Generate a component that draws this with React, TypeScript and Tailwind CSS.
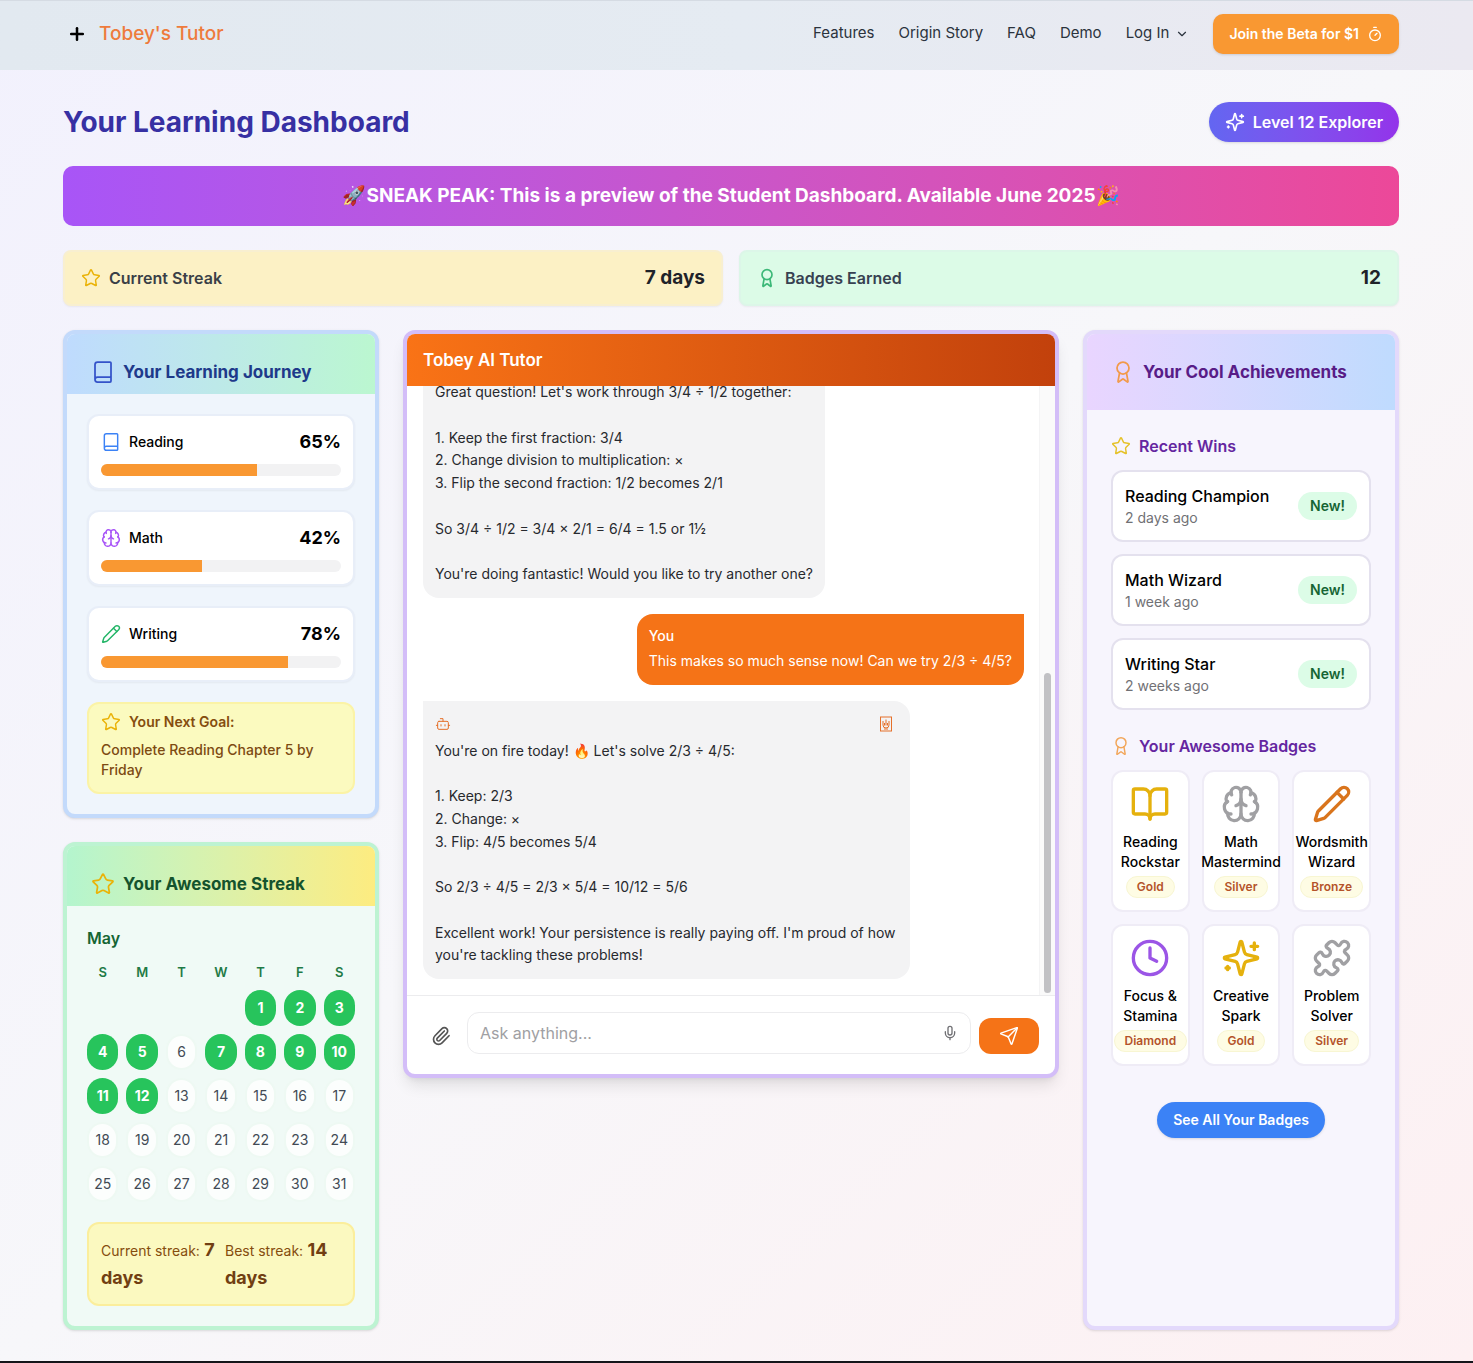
import React from "react";
import {
  Award, Book, BookOpen, Bot, Brain, ChevronDown, Clock, Mic, Paperclip, Pencil, Plus, Send, Star, Timer,
} from "lucide-react";

const navLinks = ["Features", "Origin Story", "FAQ", "Demo"];

function SparklesIcon({ className }: { className: string }) {
  return (
    <svg viewBox="0 0 24 24" className={className} fill="none" stroke="currentColor" strokeWidth="2" strokeLinecap="round" strokeLinejoin="round">
      <path d="M9.937 15.5A2 2 0 0 0 8.5 14.063l-6.135-1.582a.5.5 0 0 1 0-.962L8.5 9.936A2 2 0 0 0 9.937 8.5l1.582-6.135a.5.5 0 0 1 .963 0L14.063 8.5A2 2 0 0 0 15.5 9.937l6.135 1.581a.5.5 0 0 1 0 .964L15.5 14.063a2 2 0 0 0-1.437 1.437l-1.582 6.135a.5.5 0 0 1-.963 0z" />
      <path d="M20 3v4M22 5h-4M4 17v2M5 18H3" />
    </svg>
  );
}

function PuzzleIcon({ className }: { className: string }) {
  return (
    <svg viewBox="0 0 24 24" className={className} fill="none" stroke="currentColor" strokeWidth="2" strokeLinecap="round" strokeLinejoin="round">
      <path d="M19.439 7.85c-.049.322.059.648.289.878l1.568 1.568c.47.47.706 1.087.706 1.704s-.235 1.233-.706 1.704l-1.611 1.611a.98.98 0 0 1-.837.276c-.47-.07-.802-.48-.968-.925a2.501 2.501 0 1 0-3.214 3.214c.446.166.855.497.925.968a.979.979 0 0 1-.276.837l-1.61 1.61a2.404 2.404 0 0 1-1.705.707 2.402 2.402 0 0 1-1.704-.706l-1.568-1.568a1.026 1.026 0 0 0-.877-.29c-.493.074-.84.504-1.02.968a2.5 2.5 0 1 1-3.237-3.237c.464-.18.894-.527.967-1.02a1.026 1.026 0 0 0-.289-.877l-1.568-1.568A2.402 2.402 0 0 1 1.998 12c0-.617.236-1.234.706-1.704L4.23 8.77c.24-.24.581-.353.917-.303.515.077.877.528 1.073 1.01a2.5 2.5 0 1 0 3.259-3.259c-.482-.196-.933-.558-1.01-1.073-.05-.336.062-.676.303-.917l1.525-1.525A2.402 2.402 0 0 1 12 1.998c.617 0 1.234.236 1.704.706l1.568 1.568c.23.23.556.338.877.29.493-.074.84-.504 1.02-.968a2.5 2.5 0 1 1 3.237 3.237c-.464.18-.894.527-.967 1.02Z" />
    </svg>
  );
}

const subjects = [
  { name: "Reading", value: 65, icon: <Book className="size-5 text-[#3b82f6]" strokeWidth={1.75} /> },
  { name: "Math", value: 42, icon: <Brain className="size-5 text-[#a855f7]" strokeWidth={1.75} /> },
  { name: "Writing", value: 78, icon: <Pencil className="size-5 text-[#22b567]" strokeWidth={1.75} /> },
];

const wins = [
  { name: "Reading Champion", when: "2 days ago" },
  { name: "Math Wizard", when: "1 week ago" },
  { name: "Writing Star", when: "2 weeks ago" },
];

const badges = [
  { name: "Reading Rockstar", tier: "Gold", icon: <BookOpen className="size-10 text-[#e5b10d]" /> },
  { name: "Math Mastermind", tier: "Silver", icon: <Brain className="size-10 text-[#a0a0a3]" /> },
  { name: "Wordsmith Wizard", tier: "Bronze", icon: <Pencil className="size-10 text-[#d9741c]" /> },
  { name: "Focus & Stamina", tier: "Diamond", icon: <Clock className="size-10 text-[#9b55e6]" /> },
  { name: "Creative Spark", tier: "Gold", icon: <SparklesIcon className="size-10 text-[#e5b10d]" /> },
  { name: "Problem Solver", tier: "Silver", icon: <PuzzleIcon className="size-10 text-[#a0a0a3]" /> },
];

const weekDays = ["S", "M", "T", "W", "T", "F", "S"];
const streakDays = [1, 2, 3, 4, 5, 7, 8, 9, 10, 11, 12];
const days = Array.from({ length: 31 }, (_, i) => i + 1);

function Header() {
  return (
    <header className="flex h-[70px] items-center justify-between border-t border-[#d5dbe3] bg-linear-to-r from-[#e2e9f0] via-[#e5ebf2] to-[#ebe9f1] pr-[74px] pb-1 pl-[67px]">
      <a href="#" className="flex items-center gap-3">
        <Plus className="size-5" strokeWidth={3} />
        <span className="text-[19px] leading-7 font-medium text-[#ee7b3c]">Tobey's Tutor</span>
      </a>
      <nav className="flex items-center gap-6 text-[15px] text-[#2b333d]">
        {navLinks.map((l) => (
          <a key={l} href="#">{l}</a>
        ))}
        <button className="flex items-center gap-1.5">
          Log In <ChevronDown className="size-3.5" />
        </button>
        <button className="flex h-10 items-center gap-2 rounded-[10px] bg-[#f99832] px-4 text-sm font-semibold text-white shadow-sm">
          Join the Beta for $1 <Timer className="size-4" />
        </button>
      </nav>
    </header>
  );
}

function Journey() {
  return (
    <section className="overflow-hidden rounded-xl border-4 border-[#c3dafb] bg-[#eff5fc] shadow-sm">
      <div className="bg-linear-to-r from-[#bfdbfe] to-[#bbf7d0] p-6 pb-2">
        <h2 className="flex items-center gap-2 text-[17px] leading-7 font-bold text-[#1e3a8a]">
          <Book className="size-6 text-[#3453c9]" strokeWidth={1.75} />
          Your Learning Journey
        </h2>
      </div>
      <div className="flex flex-col gap-5 p-5">
        {subjects.map((s) => (
          <div key={s.name} className="rounded-xl border-2 border-[#e8eef8] bg-white p-3 shadow-xs">
            <div className="mb-2 flex items-center justify-between">
              <span className="flex items-center gap-2 text-sm font-medium text-black">
                {s.icon}
                {s.name}
              </span>
              <span className="text-lg leading-7 font-bold text-black">{s.value}%</span>
            </div>
            <div className="h-3 overflow-hidden rounded-full bg-[#f2f2f3]" role="progressbar" aria-label={s.name} aria-valuenow={s.value}>
              <div className="h-full bg-[#f99832]" style={{ width: `${s.value}%` }} />
            </div>
          </div>
        ))}
        <div className="rounded-xl border-2 border-[#fbf3a6] bg-[#fbfabf] px-3 pt-2 pb-3 text-sm">
          <h3 className="mb-2 flex items-center gap-2 font-semibold text-[#854d0e]">
            <Star className="size-5 text-[#eab308]" strokeWidth={1.75} />
            Your Next Goal:
          </h3>
          <p className="font-medium text-[#7d4a12]">Complete Reading Chapter 5 by Friday</p>
        </div>
      </div>
    </section>
  );
}

function Streak() {
  return (
    <section className="overflow-hidden rounded-xl border-4 border-[#bdf3d2] bg-[#f0faf6] shadow-sm">
      <div className="bg-linear-to-r from-[#b4f5ce] to-[#fdec80] p-6 pb-2">
        <h2 className="flex items-center gap-2 text-[17px] leading-7 font-bold text-[#14532d]">
          <Star className="size-6 text-[#eab308]" strokeWidth={1.75} />
          Your Awesome Streak
        </h2>
      </div>
      <div className="p-5">
        <h3 className="mb-3 text-base font-semibold text-[#166534]">May</h3>
        <div className="grid grid-cols-7 gap-2 text-center text-sm">
          {weekDays.map((d, i) => (
            <span key={i} className="text-[13px] leading-5 font-semibold text-[#1f7a46]">{d}</span>
          ))}
          <span className="col-span-4" />
          {days.map((d) =>
            streakDays.includes(d) ? (
              <span key={d} className="flex h-9 items-center justify-center rounded-full bg-[#27c45c] text-sm font-bold text-white">{d}</span>
            ) : (
              <span key={d} className="flex h-9 items-center justify-center rounded-full border-2 border-[#eef9f3] bg-[#fcfefd] text-sm text-[#424b55]">{d}</span>
            ),
          )}
        </div>
        <div className="mt-5 grid grid-cols-2 gap-2 rounded-xl border-2 border-[#fbee9c] bg-[#fbf9c0] p-3 text-lg leading-7 font-bold text-[#713f12]">
          <p><span className="text-sm leading-none font-normal text-[#854d0e]">Current streak:</span> 7 days</p>
          <p><span className="text-sm leading-none font-normal text-[#854d0e]">Best streak:</span> 14 days</p>
        </div>
      </div>
    </section>
  );
}

function BotMessage({ text }: { text: string }) {
  return (
    <div className="max-w-[81%] self-start rounded-2xl rounded-tl-none bg-[#f3f3f4] p-3">
      <div className="mb-1 flex h-[23px] items-center justify-between pr-1 text-[#e5702a]">
        <Bot className="size-4" strokeWidth={1.5} />
        <button aria-label="Read aloud">
          <svg viewBox="0 0 16 16" className="size-4" fill="none" stroke="currentColor">
            <rect x="2.5" y="1" width="11" height="14" />
            <path d="M5 5v4a3 3 0 0 0 6 0V5M8 3.500v6M6.500 7v2.500M9.500 7v2.500M6 13h4" />
          </svg>
        </button>
      </div>
      <p className="leading-relaxed whitespace-pre-line">{text}</p>
    </div>
  );
}

function Chat() {
  return (
    <section className="flex h-[748px] flex-col self-start overflow-hidden rounded-xl border-4 border-[#d3bdf8] bg-white shadow-lg lg:col-span-2">
      <h2 className="bg-linear-to-r from-[#f97316] to-[#c2410c] px-4 py-3 text-[17px] leading-7 font-semibold text-white">Tobey AI Tutor</h2>
      <div className="flex min-h-0 flex-1">
        <div className="flex min-w-0 flex-1 flex-col justify-end gap-4 overflow-hidden p-4 pr-[15px] text-sm text-[#27292e]">
          <BotMessage
            text={"Great question! Let's work through 3/4 ÷ 1/2 together:\n\n1. Keep the first fraction: 3/4\n2. Change division to multiplication: ×\n3. Flip the second fraction: 1/2 becomes 2/1\n\nSo 3/4 ÷ 1/2 = 3/4 × 2/1 = 6/4 = 1.5 or 1½\n\nYou're doing fantastic! Would you like to try another one?"}
          />
          <div className="self-end rounded-2xl rounded-tr-none bg-[#f57317] p-3 text-white">
            <div className="mb-1 font-medium">You</div>
            <p className="leading-relaxed">This makes so much sense now! Can we try 2/3 ÷ 4/5?</p>
          </div>
          <BotMessage
            text={"You're on fire today! 🔥 Let's solve 2/3 ÷ 4/5:\n\n1. Keep: 2/3\n2. Change: ×\n3. Flip: 4/5 becomes 5/4\n\nSo 2/3 ÷ 4/5 = 2/3 × 5/4 = 10/12 = 5/6\n\nExcellent work! Your persistence is really paying off. I'm proud of how you're tackling these problems!"}
          />
        </div>
        <div className="flex w-4 flex-col justify-end border-l border-[#f4f4f5] bg-[#fafafa] px-1 pb-0.5">
          <div className="h-80 rounded-full bg-[#c1c1c4]" />
        </div>
      </div>
      <form className="flex items-end gap-2 border-t border-[#ececee] p-4 pb-5">
        <button type="button" aria-label="Attach a file" className="flex size-9 items-center justify-center text-[#555]">
          <Paperclip className="size-5" />
        </button>
        <div className="flex h-[42px] flex-1 items-center rounded-xl border border-[#ececee] px-3">
          <input aria-label="Ask anything" placeholder="Ask anything..." className="min-w-0 flex-1 text-base outline-none placeholder:text-[#a0a0a3]" />
          <button type="button" aria-label="Voice input" className="text-[#707074]">
            <Mic className="size-4" />
          </button>
        </div>
        <button type="submit" aria-label="Send" className="flex h-9 w-15 items-center justify-center rounded-xl bg-[#f57317] text-white">
          <Send className="size-5" strokeWidth={1.75} />
        </button>
      </form>
    </section>
  );
}

function Achievements() {
  return (
    <section className="overflow-hidden rounded-xl border-4 border-[#e3d9fb] bg-[#f7f5fd] shadow-sm">
      <div className="bg-linear-to-r from-[#e9d5ff] to-[#bfdbfe] p-6">
        <h2 className="flex items-center gap-2 text-[17px] leading-7 font-bold text-[#581c87]">
          <Award className="size-6 text-[#f29a4a]" strokeWidth={1.75} />
          Your Cool Achievements
        </h2>
      </div>
      <div className="p-6">
        <h3 className="mb-3 flex items-center gap-2 text-base font-semibold text-[#6526a0]">
          <Star className="size-5 text-[#e5c22a]" strokeWidth={1.75} />
          Recent Wins
        </h3>
        <div className="mb-6 flex flex-col gap-3">
          {wins.map((w) => (
            <div key={w.name} className="flex items-center justify-between rounded-xl border-2 border-[#e4e1ee] bg-white p-3">
              <div>
                <p className="text-base font-medium text-black">{w.name}</p>
                <p className="text-sm text-[#717175]">{w.when}</p>
              </div>
              <span className="rounded-full bg-[#dcfce7] px-3 py-1 text-sm font-semibold text-[#166534]">New!</span>
            </div>
          ))}
        </div>
        <h3 className="mb-3 flex items-center gap-2 text-base font-semibold text-[#6526a0]">
          <Award className="size-5 text-[#f2a65a]" strokeWidth={1.75} />
          Your Awesome Badges
        </h3>
        <div className="grid grid-cols-3 gap-3">
          {badges.map((b) => (
            <div key={b.name} className="flex flex-col items-center rounded-xl border-2 border-[#efecf6] bg-white p-3">
              {b.icon}
              <p className="mt-2 mb-1 text-center text-sm font-medium text-black">{b.name}</p>
              <span className="rounded-full border border-[#f8f6d2] bg-[#fefce4] px-2.5 py-0.5 text-xs font-semibold text-[#b4532a]">{b.tier}</span>
            </div>
          ))}
        </div>
        <div className="mt-9 flex justify-center">
          <button className="h-9 rounded-full bg-[#3b82f6] px-4 text-sm font-semibold text-white shadow-sm">See All Your Badges</button>
        </div>
      </div>
    </section>
  );
}

export default function App() {
  return (
    <div className="min-h-screen border-b-2 border-[#15151a] bg-linear-to-br from-[#f2f1fd] via-[#f7f7fa] to-[#fdf0f2] font-['Inter',sans-serif]">
      <Header />
      <main className="pt-8 pr-[74px] pb-[31px] pl-[63px]">
        <div className="mb-6 flex items-center justify-between">
          <h1 className="text-[28px] leading-9 font-bold text-[#3730a3]">Your Learning Dashboard</h1>
          <div className="flex h-10 items-center gap-2 rounded-full bg-linear-to-r from-[#6366f1] to-[#9333ea] px-4 text-base font-semibold text-white shadow-sm">
            <SparklesIcon className="size-5" />
            Level 12 Explorer
          </div>
        </div>
        <div className="mb-6 rounded-[10px] bg-linear-to-r from-[#a855f7] to-[#ec4899] p-4 text-center text-[19px] leading-7 font-bold text-white">
          🚀SNEAK PEAK: This is a preview of the Student Dashboard. Available June 2025🎉
        </div>
        <div className="mb-6 grid gap-4 md:grid-cols-2">
          <div className="flex h-14 items-center gap-2 rounded-lg border-2 border-[#f8efd0] bg-[#fcf1c5] px-4 font-semibold text-[#3a3f47] shadow-xs">
            <Star className="size-5 text-[#eab308]" strokeWidth={1.75} />
            Current Streak
            <span className="ml-auto text-[19px] font-bold text-[#1f2329]">7 days</span>
          </div>
          <div className="flex h-14 items-center gap-2 rounded-lg border-2 border-[#dcf6e8] bg-[#dcfbe7] px-4 font-semibold text-[#374151] shadow-xs">
            <Award className="size-5 text-[#3cb878]" />
            Badges Earned
            <span className="ml-auto text-[19px] font-bold text-[#1f2329]">12</span>
          </div>
        </div>
        <div className="grid gap-6 lg:grid-cols-4">
          <div className="flex flex-col gap-6">
            <Journey />
            <Streak />
          </div>
          <Chat />
          <Achievements />
        </div>
      </main>
    </div>
  );
}
